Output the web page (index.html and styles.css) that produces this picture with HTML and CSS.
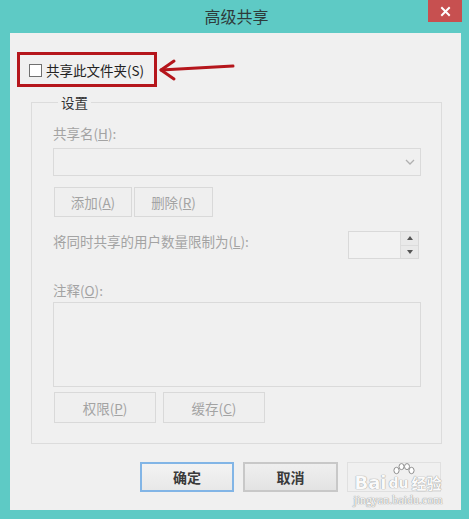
FILE: index.html
```html
<!DOCTYPE html>
<html lang="zh-CN">
<head>
<meta charset="utf-8">
<title>高级共享</title>
<link rel="stylesheet" href="styles.css">
</head>
<body>
<div class="window">
  <div class="titlebar">
    <span></span>
    <span class="title">高级共享</span>
    <span class="close"><svg width="11" height="11" viewBox="0 0 11 11"><path d="M2 2 L9 9 M9 2 L2 9" stroke="#fff" stroke-width="2" stroke-linecap="square"/></svg></span>
  </div>
  <div class="client">
    <div class="share-row">
      <div class="highlight">
        <span class="checkbox"></span>
        <span class="cb-label">共享此文件夹(S)</span>
      </div>
      <svg class="arrow" width="80" height="35" viewBox="0 0 80 35">
        <path d="M4 18 L76 14" stroke="#b5161c" stroke-width="3" fill="none" stroke-linecap="round"/>
        <path d="M17 9 L4 18 L17 27" stroke="#b5161c" stroke-width="3" fill="none" stroke-linecap="round" stroke-linejoin="round"/>
      </svg>
    </div>

    <fieldset class="group">
      <legend class="group-title">设置</legend>
      <div class="label first">共享名(<u>H</u>):</div>
      <div class="combo">
        <svg width="10" height="6" viewBox="0 0 10 6"><path d="M1 1 L5 5 L9 1" stroke="#b0b0b0" stroke-width="1.3" fill="none"/></svg>
      </div>
      <div class="btn-row tight">
        <span class="btn dis w78">添加(<u>A</u>)</span>
        <span class="btn dis w79">删除(<u>R</u>)</span>
      </div>
      <div class="limit-row">
        <span class="label">将同时共享的用户数量限制为(<u>L</u>):</span>
        <div class="spin">
          <span class="spin-field"></span>
          <span class="spin-btns">
            <span class="spin-btn"><svg width="6" height="4" viewBox="0 0 6 4"><path d="M0 4 L3 0 L6 4 Z" fill="#555"/></svg></span>
            <span class="spin-btn"><svg width="6" height="4" viewBox="0 0 6 4"><path d="M0 0 L3 4 L6 0 Z" fill="#555"/></svg></span>
          </span>
        </div>
      </div>
      <div class="label note">注释(<u>O</u>):</div>
      <div class="textarea"></div>
      <div class="btn-row wide">
        <span class="btn dis w102">权限(<u>P</u>)</span>
        <span class="btn dis w102">缓存(<u>C</u>)</span>
      </div>
    </fieldset>

    <div class="actions">
      <span class="btn ok">确定</span>
      <span class="btn cancel">取消</span>
      <span class="btn dis apply"></span>
    </div>

    <div class="watermark">
      <svg class="paw" width="24" height="15" viewBox="0 0 24 15">
        <g fill="#fff" stroke="#8e8e8e" stroke-width="1">
          <ellipse cx="4.5" cy="7.5" rx="2.6" ry="3.2"/>
          <ellipse cx="9.5" cy="3.6" rx="2.5" ry="3"/>
          <ellipse cx="15" cy="3.6" rx="2.5" ry="3"/>
          <ellipse cx="19.5" cy="7.5" rx="2.6" ry="3.2"/>
        </g>
      </svg>
      <div class="wm-main"><span class="wm-bai">Bai</span><span class="wm-du">du</span><span class="wm-cn">经验</span></div>
      <div class="wm-url">jingyan.baidu.com</div>
    </div>
  </div>
</div>
</body>
</html>
```

FILE: styles.css
```css
html, body {
  margin: 0;
  padding: 0;
}
body {
  width: 469px;
  height: 519px;
  background: #5ecac5;
  font-family: "Noto Sans CJK SC", "Noto Sans", sans-serif;
  overflow: hidden;
}
.window {
  display: flex;
  flex-direction: column;
  height: 519px;
}
.titlebar {
  height: 33px;
  display: grid;
  grid-template-columns: 1fr auto 1fr;
  align-items: center;
}
.title {
  font-size: 16px;
  color: #2e3b3b;
  line-height: 20px;
  padding-left: 4px;
  padding-bottom: 2px;
}
.close {
  justify-self: end;
  align-self: start;
  width: 34px;
  height: 22px;
  margin-right: 7px;
  background: #c75050;
  display: flex;
  align-items: center;
  justify-content: center;
}
.client {
  position: relative;
  margin: 0 8px 0 10px;
  height: 477px;
  background: #f0f0f0;
  display: flex;
  flex-direction: column;
  box-sizing: border-box;
  font-size: 13.5px;
}
.share-row {
  display: flex;
  padding-top: 19px;
  padding-left: 7px;
}
.highlight {
  box-sizing: border-box;
  width: 140px;
  height: 35px;
  border: 3px solid #b5161c;
  display: flex;
  align-items: center;
  padding-left: 9px;
  gap: 4px;
}
.checkbox {
  box-sizing: border-box;
  width: 13px;
  height: 13px;
  border: 1px solid #707070;
  background: #fff;
  margin-top: 1px;
}
.cb-label {
  color: #222;
  line-height: 18px;
}
.arrow {
  display: block;
}
.group {
  margin: 7px 19px 0 21px;
  padding: 0 20px 20px 21px;
  border: 1px solid #dcdcdc;
  display: flex;
  flex-direction: column;
  min-width: 0;
}
.group-title {
  margin-left: 5px;
  padding: 0 3px;
  color: #333;
  line-height: 16px;
  font-size: 13.5px;
}
.label {
  color: #a3a3a3;
  line-height: 18px;
  white-space: nowrap;
}
.label.first {
  margin-top: 14px;
}
.combo {
  margin-top: 6px;
  height: 28px;
  box-sizing: border-box;
  border: 1px solid #dadada;
  background: #f0f0f0;
  display: flex;
  align-items: center;
  justify-content: flex-end;
  padding-right: 5px;
}
.btn-row {
  display: flex;
  margin-left: 1px;
}
.btn-row.tight {
  margin-top: 11px;
  gap: 2px;
}
.btn-row.wide {
  margin-top: 5px;
  gap: 7px;
}
.btn {
  box-sizing: border-box;
  display: flex;
  align-items: center;
  justify-content: center;
  border: 1px solid #d9d9d9;
  background: #efefef;
  line-height: 18px;
}
.btn.dis {
  color: #a3a3a3;
}
.w78 { width: 78px; height: 30px; }
.w79 { width: 79px; height: 30px; }
.w102 { width: 102px; height: 31px; }
.limit-row {
  margin-top: 14px;
  display: flex;
  justify-content: space-between;
  align-items: flex-start;
}
.limit-row .label {
  margin-top: 1px;
}
.spin {
  box-sizing: border-box;
  width: 71px;
  height: 28px;
  margin-right: 2px;
  border: 1px solid #d9d9d9;
  background: #f2f2f2;
  display: flex;
}
.spin-field {
  flex: 1;
}
.spin-btns {
  width: 17px;
  display: flex;
  flex-direction: column;
  border-left: 1px solid #dcdcdc;
}
.spin-btn {
  flex: 1;
  display: flex;
  align-items: center;
  justify-content: center;
  background: #e9e9e9;
}
.spin-btn + .spin-btn {
  border-top: 1px solid #dcdcdc;
}
.label.note {
  margin-top: 22px;
}
.textarea {
  margin-top: 3px;
  height: 85px;
  box-sizing: border-box;
  border: 1px solid #dadada;
  background: #f0f0f0;
}
.actions {
  display: flex;
  justify-content: flex-end;
  gap: 9px;
  margin-top: 18px;
  padding-right: 20px;
}
.actions .btn {
  width: 94px;
  height: 30px;
  font-size: 14px;
  font-weight: bold;
  color: #3a3a3a;
}
.btn.ok {
  border: 2px solid #82b5e6;
  background: linear-gradient(#f3f3f3, #e8e8e8);
}
.btn.cancel {
  width: 95px;
  border: 2px solid #c8c8c8;
  background: linear-gradient(#efefef, #e3e3e3);
}
.btn.apply {
  background: #f0f0f0;
  border-color: #e0e0e0;
}
.watermark {
  position: absolute;
  left: 340px;
  top: 430px;
  width: 96px;
  display: flex;
  flex-direction: column;
  align-items: center;
}
.paw {
  display: block;
  margin-left: 12px;
}
.wm-main {
  display: flex;
  align-items: center;
  line-height: 18px;
  margin-top: -4px;
}
.wm-bai, .wm-du {
  font-family: "DejaVu Sans", sans-serif;
  font-weight: bold;
  font-size: 18px;
  color: #fafafa;
  text-shadow: 0 0 1px #9a9a9a, 0 0 1px #9a9a9a;
}
.wm-du {
  font-size: 14px;
  margin-left: 2px;
}
.wm-cn {
  margin-left: 3px;
  font-size: 15px;
  font-weight: bold;
  color: #fafafa;
  text-shadow: 0 0 1px #9a9a9a, 0 0 1px #9a9a9a;
}
.wm-url {
  font-family: "Liberation Serif", serif;
  font-size: 12px;
  line-height: 13px;
  color: #fbfbfb;
  text-shadow: 0 0 1px #8a8a8a, 0 0 1px #8a8a8a;
  margin-top: 2px;
}
```
